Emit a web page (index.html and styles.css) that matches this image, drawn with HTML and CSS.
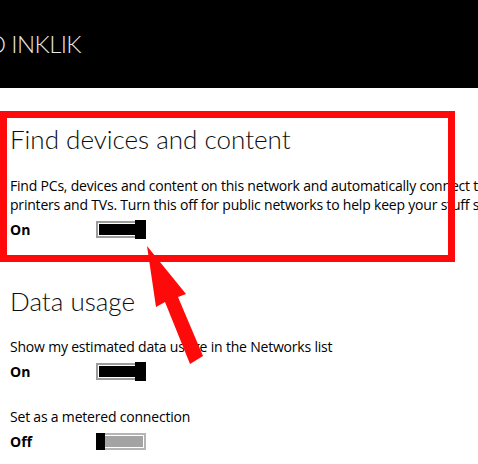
FILE: index.html
```html
<!DOCTYPE html>
<html lang="en">
<head>
<meta charset="utf-8">
<title>Network settings</title>
<link rel="stylesheet" href="styles.css">
</head>
<body>
<header class="topbar">
  <h1 class="title"><span class="title-cut">O</span> INKLIK</h1>
</header>
<main class="content">
  <section class="group">
    <h2 class="group-title">Find devices and content</h2>
    <p class="desc">Find PCs, devices and content on this network and automatically connect to devices like<br>printers and TVs. Turn this off for public networks to help keep your stuff safe.</p>
    <div class="row">
      <span class="state">On</span>
      <span class="toggle on"><span class="track"></span><span class="thumb"></span></span>
    </div>
  </section>
  <section class="group group-data">
    <h2 class="group-title">Data usage</h2>
    <p class="desc">Show my estimated data usage in the Networks list</p>
    <div class="row">
      <span class="state">On</span>
      <span class="toggle on"><span class="track"></span><span class="thumb"></span></span>
    </div>
    <p class="desc desc-second">Set as a metered connection</p>
    <div class="row">
      <span class="state">Off</span>
      <span class="toggle off"><span class="thumb"></span><span class="track"></span></span>
    </div>
  </section>
</main>
<div class="highlight"></div>
<svg class="arrow" width="478" height="464" viewBox="0 0 478 464" aria-hidden="true">
  <polygon points="147,246 186,294 178,297 203,356 190,364 165,302 156,307" fill="#ff0a0a"/>
</svg>
</body>
</html>
```
FILE: styles.css
```css
html, body {
  margin: 0;
  padding: 0;
}
body {
  width: 478px;
  height: 464px;
  overflow: hidden;
  background: #ffffff;
  font-family: "Open Sans", "Noto Sans", sans-serif;
  color: #000000;
  position: relative;
}
.topbar {
  height: 88px;
  background: #000000;
  display: flex;
  align-items: center;
}
.title {
  margin: 0 0 0 -13px;
  font-family: "Lato", "Open Sans", sans-serif;
  font-size: 24px;
  font-weight: 300;
  letter-spacing: -0.6px;
  line-height: 36px;
  color: #e6e6e6;
  white-space: nowrap;
}
.content {
  padding-left: 10px;
  width: 640px;
}
.group-title {
  margin: 33px 0 0 0;
  font-family: "Lato", "Open Sans", sans-serif;
  font-size: 26px;
  font-weight: 300;
  line-height: 36px;
  color: #0d0d0d;
  white-space: nowrap;
}
.desc {
  margin: 19px 0 0 0;
  font-size: 14px;
  letter-spacing: -0.2px;
  line-height: 19px;
  white-space: nowrap;
}
.group-data .group-title {
  margin-top: 44px;
}
.group-data .desc {
  margin-top: 18px;
}
.group-data .desc-second {
  margin-top: 26px;
}
.row {
  display: flex;
  align-items: center;
  height: 20px;
  margin-top: 5px;
}
.state {
  width: 86px;
  font-size: 14px;
  font-weight: 700;
  line-height: 19px;
}
.toggle {
  display: flex;
  width: 50px;
  height: 19px;
}
.track {
  flex: 1;
  box-sizing: border-box;
  height: 17px;
  margin-top: 1px;
  border: 2px solid #9c9c9c;
  padding: 1px;
  background-clip: content-box;
}
.toggle.on .track {
  background-color: #000000;
  border-right: none;
  padding-right: 0;
}
.toggle.off .track {
  background-color: #a3a3a3;
  border-left: none;
  padding-left: 0;
  border-color: #b4b4b4;
}
.thumb {
  width: 11px;
  height: 19px;
  background: #000000;
}
.toggle.off .thumb {
  width: 9px;
  height: 17px;
  margin-top: 1px;
}
.highlight {
  position: absolute;
  left: 0;
  top: 111px;
  width: 455px;
  height: 151px;
  box-sizing: border-box;
  border: 7px solid #ff0a0a;
}
.arrow {
  position: absolute;
  left: 0;
  top: 0;
}
```
